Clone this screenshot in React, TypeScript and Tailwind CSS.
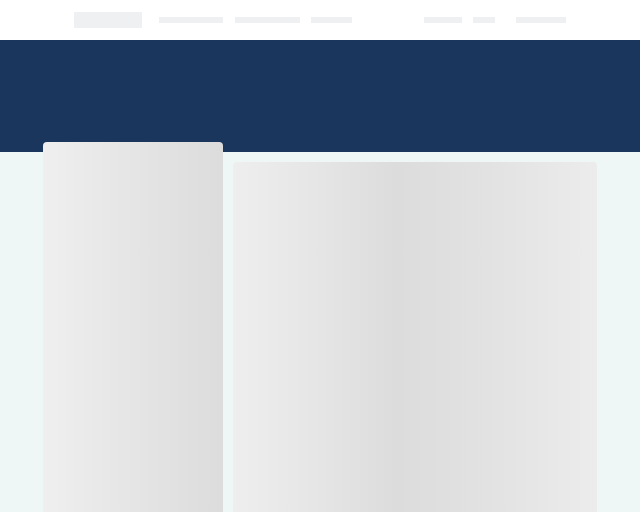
export default function App() {
  return (
    <div className="h-[512px] w-full overflow-hidden bg-[#eff7f6] font-['Liberation_Sans',sans-serif]">
      {/* top nav skeleton */}
      <header className="flex h-10 items-center bg-white pl-[74px]">
        <div className="h-4 w-[68px] bg-[#eef0f1]" />
        <nav className="ml-[17px] flex items-center">
          <div className="h-[6px] w-16 bg-[#eef0f1]" />
          <div className="ml-3 h-[6px] w-[65px] bg-[#eef0f1]" />
          <div className="ml-[11px] h-[6px] w-[41px] bg-[#eef0f1]" />
        </nav>
        <div className="ml-[72px] flex items-center">
          <div className="h-[6px] w-[38px] bg-[#eef0f1]" />
          <div className="ml-[11px] h-[6px] w-[22px] bg-[#eef0f1]" />
          <div className="ml-[21px] h-[6px] w-[50px] bg-[#eef0f1]" />
        </div>
      </header>

      <div className="h-[112px] bg-[#1a365d]" />

      <main className="-mt-[10px] flex gap-[10px] px-[43px]">
        <aside className="h-[600px] w-[180px] shrink-0 rounded-t-[4px] bg-[linear-gradient(90deg,#efefef_0%,#e6e6e6_45%,#dcdcdc_100%)]" />
        <section className="mt-5 h-[600px] flex-1 rounded-t-[4px] bg-[linear-gradient(90deg,#eeeeee_0%,#e6e6e6_22%,#dcdcdc_45%,#e2e2e2_70%,#ececec_100%)]" />
      </main>
    </div>
  );
}
